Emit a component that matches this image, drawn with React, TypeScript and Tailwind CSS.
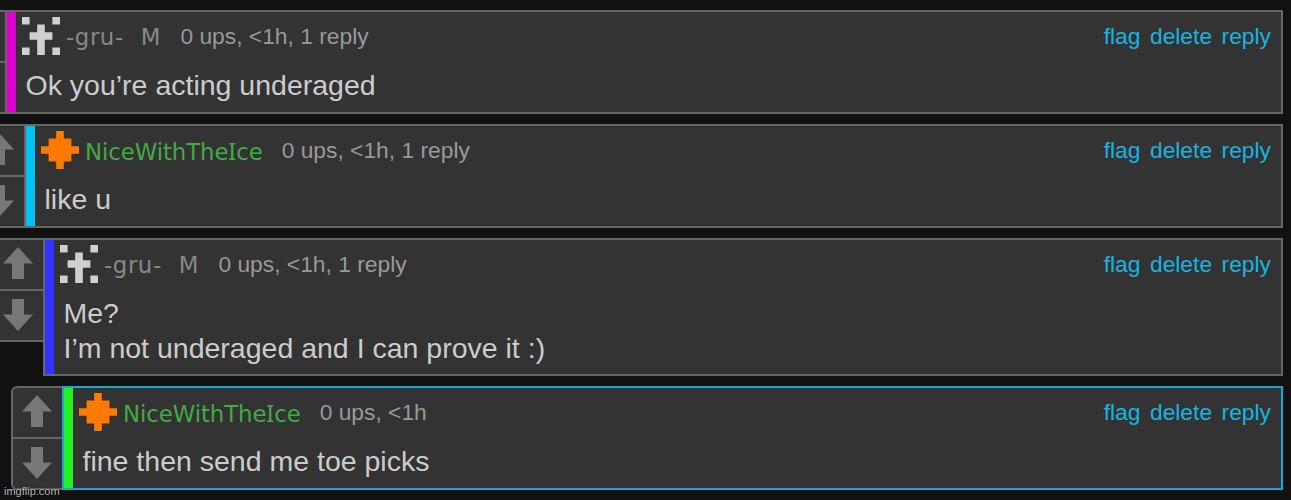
interface Comment {
  user: string;
  isMod?: boolean;
  stats: string;
  lines: string[];
  avatar: string;
  avatarClass: string;
  userClass: string;
  barClass: string;
  rowClass: string;
  boxClass: string;
}

const CROSS = "M0 0h1v1H0zM4 0h1v1H4zM0 4h1v1H0zM4 4h1v1H4zM2 1h1v1h1v1H3v2H2V3H1V2h1z";
const BURST = "M2 0h1v1h1v1h1v1H4v1H3v1H2V4H1V3H0V2h1V1h1z";

const comments: Comment[] = [
  {
    user: "-gru-",
    isMod: true,
    stats: "0 ups, <1h, 1 reply",
    lines: ["Ok you’re acting underaged"],
    avatar: CROSS,
    avatarClass: "text-[#d0d0d0]",
    userClass: "text-[#888888] tracking-[0.6px]",
    barClass: "bg-[#dd00cc]",
    rowClass: "-ml-[46px] h-[104px]",
    boxClass: "border-[#666666]",
  },
  {
    user: "NiceWithTheIce",
    stats: "0 ups, <1h, 1 reply",
    lines: ["like u"],
    avatar: BURST,
    avatarClass: "text-[#ff7a00]",
    userClass: "text-[#44aa44] tracking-[-0.07px]",
    barClass: "bg-[#00bff3]",
    rowClass: "-ml-[27px] h-[104px]",
    boxClass: "border-[#666666]",
  },
  {
    user: "-gru-",
    isMod: true,
    stats: "0 ups, <1h, 1 reply",
    lines: ["Me?", "I’m not underaged and I can prove it :)"],
    avatar: CROSS,
    avatarClass: "text-[#d0d0d0]",
    userClass: "text-[#888888] tracking-[0.6px]",
    barClass: "bg-[#3333ff]",
    rowClass: "-ml-[8px] h-[138px]",
    boxClass: "border-[#666666]",
  },
  {
    user: "NiceWithTheIce",
    stats: "0 ups, <1h",
    lines: ["fine then send me toe picks"],
    avatar: BURST,
    avatarClass: "text-[#ff7a00]",
    userClass: "text-[#44aa44] tracking-[-0.07px]",
    barClass: "bg-[#22f022]",
    rowClass: "ml-[11px] h-[104px]",
    boxClass: "border-[#18a8cf]",
  },
];

function Arrow({ className = "" }: { className?: string }) {
  return (
    <svg viewBox="0 0 30 32" className={`h-8 w-[30px] ${className}`} fill="#777777">
      <path d="M15 0L30 16.5H21V32H9V16.5H0z" />
    </svg>
  );
}

function Votes() {
  return (
    <div className="flex h-[104px] w-[51px] shrink-0 flex-col rounded-l-md border-2 border-r-0 border-[#666666] bg-[#333333]">
      <div className="flex h-[51px] items-center justify-center border-b-2 border-[#666666] pr-0.5 pb-[3px]">
        <Arrow />
      </div>
      <div className="flex flex-1 items-center justify-center pr-0.5 pb-px">
        <Arrow className="rotate-180" />
      </div>
    </div>
  );
}

function UserName({ name }: { name: string }) {
  return name.split(/(I)/).map((part, i) =>
    part === "I" ? (
      <span key={i} className="font-['Noto_Sans',sans-serif] text-[23.5px]">
        {part}
      </span>
    ) : (
      part
    )
  );
}

function CommentRow({ comment }: { comment: Comment }) {
  return (
    <div className={`flex ${comment.rowClass}`}>
      <Votes />
      <div className={`flex min-w-0 flex-1 border-2 bg-[#333333] ${comment.boxClass}`}>
        <div className={`w-[9px] shrink-0 ${comment.barClass}`} />
        <div className="min-w-0 flex-1 pt-[5px] pr-2.5 pl-1.5">
          <div className="flex h-[38px] items-center text-[22.8px] leading-[38px]">
            <svg
              viewBox="0 0 5 5"
              className={`size-[38px] shrink-0 ${comment.avatarClass}`}
              fill="currentColor"
            >
              <path d={comment.avatar} />
            </svg>
            <span
              className={`ml-1.5 h-[38px] pt-px font-['DejaVu_Sans',sans-serif] leading-[38px] ${comment.userClass}`}
            >
              <UserName name={comment.user} />
            </span>
            {comment.isMod && (
              <span className="ml-[17px] h-[38px] pt-px font-['DejaVu_Sans',sans-serif] text-[#888888]">M</span>
            )}
            <span className={`text-[#999999] ${comment.isMod ? "ml-5" : "ml-[19px]"}`}>{comment.stats}</span>
            <div className="ml-auto flex gap-[9.5px] text-[#18b3e0]">
              <a>flag</a>
              <a>delete</a>
              <a>reply</a>
            </div>
          </div>
          <div className="mt-[13px] ml-[3.5px] text-[28.5px] leading-[34.5px] text-[#cccccc]">
            {comment.lines.map((line) => (
              <p key={line}>{line}</p>
            ))}
          </div>
        </div>
      </div>
    </div>
  );
}

export default function App() {
  return (
    <div className="relative h-[500px] w-[1291px] overflow-hidden bg-[#111111] font-['Liberation_Sans',sans-serif]">
      <div className="flex flex-col gap-2.5 pt-2.5 pr-2">
        {comments.map((comment, i) => (
          <CommentRow key={i} comment={comment} />
        ))}
      </div>
      <span className="absolute bottom-0 left-1 text-[11px] leading-[17px] text-[#b8b8b8] [text-shadow:0_0_2px_#000]">
        imgflip.com
      </span>
    </div>
  );
}
